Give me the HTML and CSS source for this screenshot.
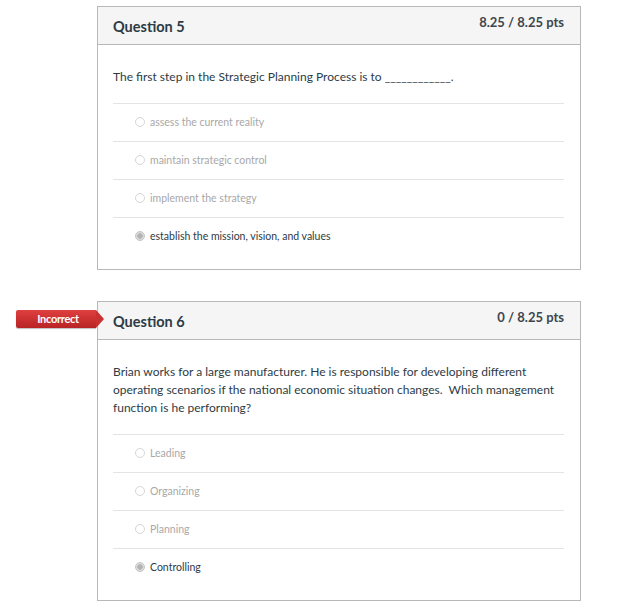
FILE: index.html
```html
<!DOCTYPE html>
<html lang="en">
<head>
    <meta charset="UTF-8">
    <meta name="viewport" content="width=device-width, initial-scale=1.0">
    <title>Quiz Results</title>
    <link rel="stylesheet" href="styles.css">
</head>
<body>
    <div class="quiz">
        <div class="question">
            <div class="question-header">
                <h3 class="question-title">Question 5</h3>
                <div class="question-points">8.25 / 8.25 pts</div>
            </div>
            <div class="question-body">
                <p class="question-text">The first step in the Strategic Planning Process is to ____________.</p>
                <div class="answers">
                    <div class="answer"><span class="radio"></span>assess the current reality</div>
                    <div class="answer"><span class="radio"></span>maintain strategic control</div>
                    <div class="answer"><span class="radio"></span>implement the strategy</div>
                    <div class="answer selected"><span class="radio"></span>establish the mission, vision, and values</div>
                </div>
            </div>
        </div>

        <div class="question">
            <div class="badge-incorrect">Incorrect</div>
            <div class="question-header">
                <h3 class="question-title">Question 6</h3>
                <div class="question-points">0 / 8.25 pts</div>
            </div>
            <div class="question-body">
                <p class="question-text">Brian works for a large manufacturer. He is responsible for developing different operating scenarios if the national economic situation changes.&nbsp; Which management function is he performing?</p>
                <div class="answers">
                    <div class="answer"><span class="radio"></span>Leading</div>
                    <div class="answer"><span class="radio"></span>Organizing</div>
                    <div class="answer"><span class="radio"></span>Planning</div>
                    <div class="answer selected"><span class="radio"></span>Controlling</div>
                </div>
            </div>
        </div>
    </div>
</body>
</html>
```

FILE: styles.css
```css
body {
    font-family: 'Lato', 'Liberation Sans', sans-serif;
    background-color: white;
    margin: 0;
    padding: 0;
    color: #2d3b45;
}

.quiz {
    padding: 6px 0 0 97px;
}

.question {
    position: relative;
    width: 482px;
    border: 1px solid #b8b8b8;
    margin-bottom: 31px;
}

.question-header {
    display: flex;
    justify-content: space-between;
    align-items: flex-start;
    height: 37px;
    padding: 0 16px 0 15px;
    background-color: #f5f5f5;
    border-bottom: 1px solid #b8b8b8;
}

.question-title {
    margin: 0;
    padding-top: 9px;
    font-size: 14.5px;
    line-height: 22px;
    font-weight: bold;
}

.question-points {
    padding-top: 6px;
    font-size: 13px;
    line-height: 18px;
    font-weight: bold;
    color: #3d464d;
}

.question-body {
    padding: 23px 16px 14px 15px;
}

.question-text {
    margin: 0 0 17px;
    font-size: 12px;
    line-height: 18px;
}

.answer {
    display: flex;
    align-items: center;
    height: 36px;
    padding: 0 0 1px 22px;
    border-top: 1px solid #e4e4e4;
    font-size: 10.5px;
    color: #a8a8a8;
}

.radio {
    width: 8px;
    height: 8px;
    border: 1px solid #d6d6d6;
    border-radius: 50%;
    margin-right: 5px;
    background: white;
}

.answer.selected {
    color: #2d3b45;
}

.answer.selected .radio {
    border-color: #c4c4c4;
    background: radial-gradient(circle, #b4b4b4 0 2.5px, #dcdcdc 3px);
}

.badge-incorrect {
    position: absolute;
    left: -82px;
    top: 8px;
    width: 76px;
    height: 18px;
    line-height: 18px;
    padding-left: 4px;
    text-align: center;
    font-size: 11px;
    font-weight: bold;
    color: white;
    letter-spacing: -0.3px;
    background: linear-gradient(#df3f3f, #b82424);
    border-radius: 2px 0 0 2px;
    box-shadow: 0 1px 1px rgba(0, 0, 0, 0.25);
}

.badge-incorrect::after {
    content: '';
    position: absolute;
    right: -8px;
    top: 0;
    border-top: 9px solid transparent;
    border-bottom: 9px solid transparent;
    border-left: 8px solid #c93030;
}
```
